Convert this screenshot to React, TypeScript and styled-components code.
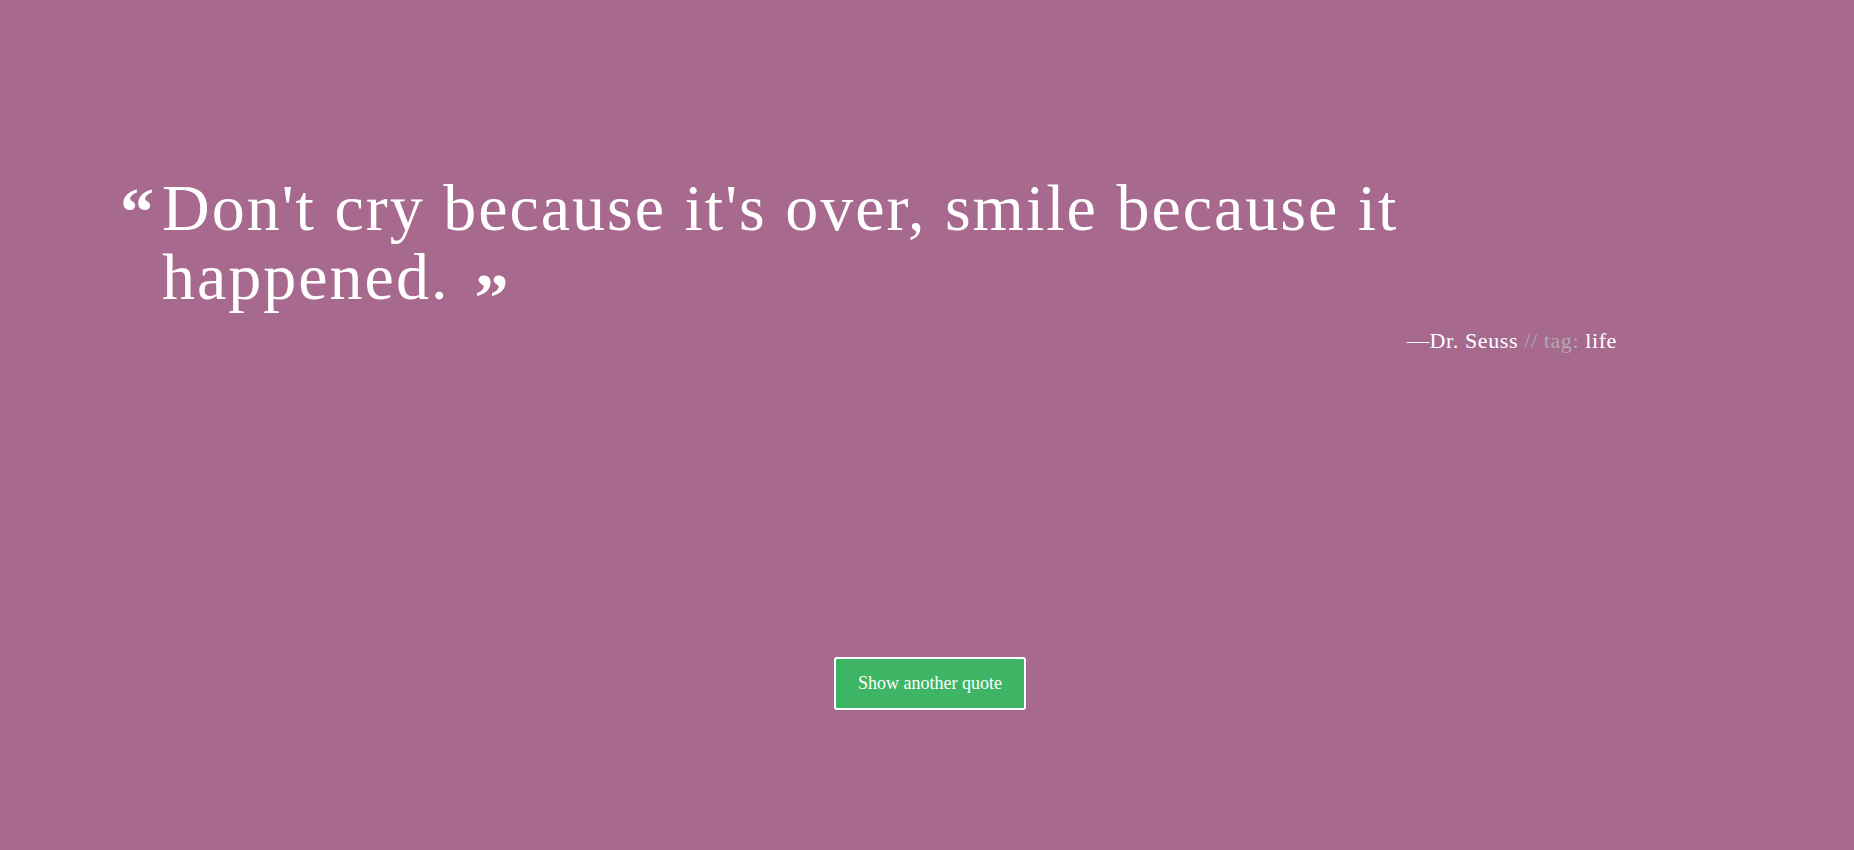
import React from "react";
import styled, { createGlobalStyle } from "styled-components";

const Global = createGlobalStyle`
  html, body { margin: 0; padding: 0; }
  body { background: #a8698f; }
`;

const Page = styled.main`
  min-height: 850px;
  background: #a8698f;
  color: #ffffff;
  box-sizing: border-box;
  padding: 173px 237px 0 120px;
  display: flex;
  flex-direction: column;
`;

const Quote = styled.blockquote`
  margin: 0;
  display: flex;
  gap: 12px;
  align-items: flex-start;
`;

const OpenMark = styled.span`
  font-family: "Liberation Serif", serif;
  font-weight: 700;
  font-size: 68px;
  line-height: 1;
  color: #ffffff;
  display: block;
  margin-top: 5px;
  width: 30px;
  flex: none;
`;

const CloseMark = styled.span`
  font-family: "Liberation Serif", serif;
  font-weight: 700;
  font-size: 68px;
  line-height: 0;
  letter-spacing: 0;
  color: #ffffff;
  margin-left: 25px;
  vertical-align: -21px;
`;

const QuoteText = styled.p`
  margin: 0;
  font-family: "Liberation Serif", serif;
  font-size: 66px;
  line-height: 69px;
  letter-spacing: 2px;
  color: #ffffff;
`;

const Attribution = styled.p`
  margin: 15px 0 0;
  text-align: right;
  font-family: "Liberation Serif", serif;
  font-size: 22px;
  line-height: 30px;
  letter-spacing: 0.6px;
  color: #ffffff;
`;

const Muted = styled.span`
  color: #aeaaae;
`;

const Actions = styled.div`
  display: flex;
  justify-content: center;
  margin-top: 301px;
  margin-left: -114px;
  margin-right: -237px;
`;

const Button = styled.button`
  width: 192px;
  height: 53px;
  background: #3db564;
  border: 2px solid #ffffff;
  border-radius: 3px;
  color: #ffffff;
  font-family: "Liberation Serif", serif;
  font-size: 18px;
  cursor: pointer;
  padding: 0;
`;

export default function App() {
  return (
    <>
      <Global />
      <Page>
        <Quote>
          <OpenMark>“</OpenMark>
          <QuoteText>
            Don't cry because it's over, smile because it happened.
            <CloseMark>”</CloseMark>
          </QuoteText>
        </Quote>
        <Attribution>
          —Dr. Seuss <Muted>// tag:</Muted> life
        </Attribution>
        <Actions>
          <Button type="button">Show another quote</Button>
        </Actions>
      </Page>
    </>
  );
}
